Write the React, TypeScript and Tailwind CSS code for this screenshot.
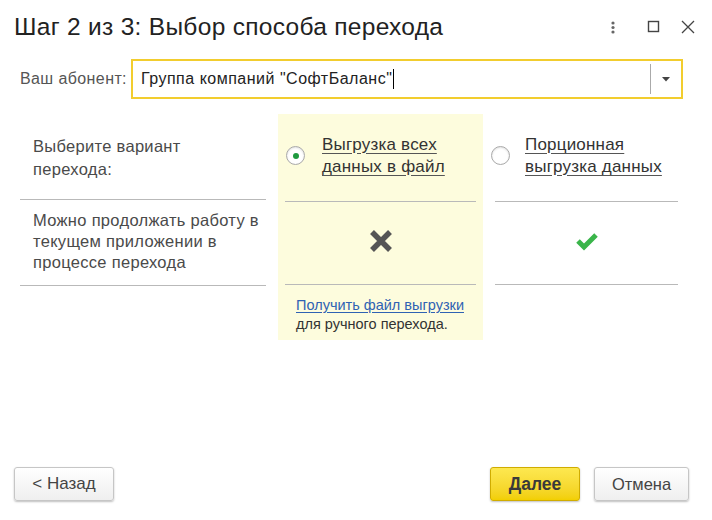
import React from "react";

function RadioDot({ checked }: { checked: boolean }) {
  return (
    <div className="w-[19px] h-[19px] rounded-full border border-[#a9a9a9] bg-white flex items-center justify-center shrink-0 shadow-[inset_0_1px_2px_rgba(0,0,0,0.12)]">
      {checked && <div className="w-[6px] h-[6px] rounded-full bg-[#1f9a3e]" />}
    </div>
  );
}

export default function App() {
  return (
    <div
      className="w-[712px] h-[520px] bg-white relative overflow-hidden text-[#404040]"
      style={{ fontFamily: '"Liberation Sans", Arial, sans-serif' }}
    >
      {/* Title bar */}
      <div className="flex items-center h-[54px] pl-[14px] pr-[16px]">
        <div className="text-[24.5px] text-[#222] leading-none tracking-[0.3px]">
          Шаг 2 из 3: Выбор способа перехода
        </div>
        <div className="ml-auto flex items-center">
          <svg width="40" height="20" viewBox="0 0 40 20" className="text-[#666]">
            <circle cx="27" cy="6" r="1.6" fill="currentColor" />
            <circle cx="27" cy="10.5" r="1.6" fill="currentColor" />
            <circle cx="27" cy="15" r="1.6" fill="currentColor" />
          </svg>
          <svg width="40" height="20" viewBox="0 0 40 20" className="text-[#444]">
            <rect x="22.5" y="4.5" width="10" height="10" fill="none" stroke="currentColor" strokeWidth="1.4" />
          </svg>
          <svg width="30" height="20" viewBox="0 0 30 20" className="text-[#444]">
            <path d="M16 4 L28 16 M28 4 L16 16" stroke="currentColor" strokeWidth="1.3" fill="none" />
          </svg>
        </div>
      </div>

      {/* Subscriber row */}
      <div className="flex items-center pl-[20px] pr-[29px] mt-[5px]">
        <div className="text-[16px] tracking-[0.4px] text-[#555] mr-[4px]">Ваш абонент:</div>
        <div className="flex-1 h-[40px] border-2 border-[#f2cd2e] flex items-center bg-white">
          <div className="flex-1 pl-[8px] text-[16px] tracking-[0.5px] text-[#222] flex items-center">
            Группа компаний "СофтБаланс"
            <span className="inline-block w-[1px] h-[20px] bg-black ml-[1px]" />
          </div>
          <div className="w-[1px] h-[30px] bg-[#aaa]" />
          <div className="w-[30px] flex items-center justify-center">
            <svg width="8" height="5" viewBox="0 0 8 5">
              <path d="M0 0 L8 0 L4 4.5 Z" fill="#444" />
            </svg>
          </div>
        </div>
      </div>

      {/* Comparison table */}
      <div className="flex pl-[20px] mt-[15px] text-[16.5px] tracking-[0.3px]">
        {/* left column */}
        <div className="w-[246px] flex flex-col">
          <div className="h-[86px] border-b border-[#b9b9b9] pl-[13px] pt-[21px] leading-[23px] text-[#4a4a4a]">
            Выберите вариант
            <br />
            перехода:
          </div>
          <div className="h-[86px] border-b border-[#b9b9b9] pl-[13px] pt-[10px] leading-[21px] text-[#4a4a4a] whitespace-nowrap">
            Можно продолжать работу в
            <br />
            текущем приложении в
            <br />
            процессе перехода
          </div>
        </div>

        {/* middle column (selected, highlighted) */}
        <div className="w-[205px] ml-[12px] bg-[#fdfcdd] px-[7px] h-[226px] flex flex-col">
          <div className="h-[88px] border-b border-[#b9b9b9] flex items-start pt-[20px] pl-[1px]">
            <div className="mt-[12px]">
              <RadioDot checked />
            </div>
            <div className="ml-[17px] text-[17px] tracking-[0.2px] leading-[22px] text-[#333] underline underline-offset-[3px] decoration-[#555] whitespace-nowrap">
              Выгрузка всех
              <br />
              данных в файл
            </div>
          </div>
          <div className="h-[83px] border-b border-[#b9b9b9] flex items-center justify-center">
            <svg width="26" height="26" viewBox="0 0 26 26" className="-mt-[4px]">
              <path d="M4 4 L22 22 M22 4 L4 22" stroke="#555" strokeWidth="5.5" strokeLinecap="butt" fill="none" />
            </svg>
          </div>
          <div className="pt-[11px] pl-[11px] text-[14.5px] tracking-[0px] leading-[19px] whitespace-nowrap">
            <div className="text-[#2f62b3] underline underline-offset-2">Получить файл выгрузки</div>
            <div className="text-[#333]">для ручного перехода.</div>
          </div>
        </div>

        {/* right column */}
        <div className="w-[183px] ml-[12px] flex flex-col">
          <div className="h-[88px] border-b border-[#b9b9b9] flex items-start pt-[20px]">
            <div className="mt-[12px] -ml-[4px]">
              <RadioDot checked={false} />
            </div>
            <div className="ml-[15px] text-[17px] tracking-[0.2px] leading-[22px] text-[#333] underline underline-offset-[3px] decoration-[#555] whitespace-nowrap">
              Порционная
              <br />
              выгрузка данных
            </div>
          </div>
          <div className="h-[83px] border-b border-[#b9b9b9] flex items-center justify-center">
            <svg width="26" height="20" viewBox="0 0 26 20" className="-mt-[4px]">
              <path d="M4 10 L10 16 L22 4" stroke="#3ab54a" strokeWidth="5" fill="none" strokeLinejoin="miter" />
            </svg>
          </div>
        </div>
      </div>

      {/* Buttons */}
      <div className="absolute left-0 right-0 top-[467px] flex px-[14px] pr-[23px]">
        <button className="w-[100px] h-[34px] rounded-[3px] border border-[#c6c6c6] bg-gradient-to-b from-white to-[#efefef] shadow-[0_1px_2px_rgba(0,0,0,0.25)] text-[17px] text-[#444]">
          &lt; Назад
        </button>
        <button className="ml-auto w-[90px] h-[34px] rounded-[3px] border border-[#d0ac00] bg-gradient-to-b from-[#fde84f] to-[#f2cf00] shadow-[0_1px_2px_rgba(0,0,0,0.25)] text-[17.5px] font-bold text-[#3a3a3a]">
          Далее
        </button>
        <button className="ml-[14px] w-[95px] h-[34px] rounded-[3px] border border-[#c6c6c6] bg-gradient-to-b from-white to-[#efefef] shadow-[0_1px_2px_rgba(0,0,0,0.25)] text-[16.5px] text-[#444]">
          Отмена
        </button>
      </div>
    </div>
  );
}
